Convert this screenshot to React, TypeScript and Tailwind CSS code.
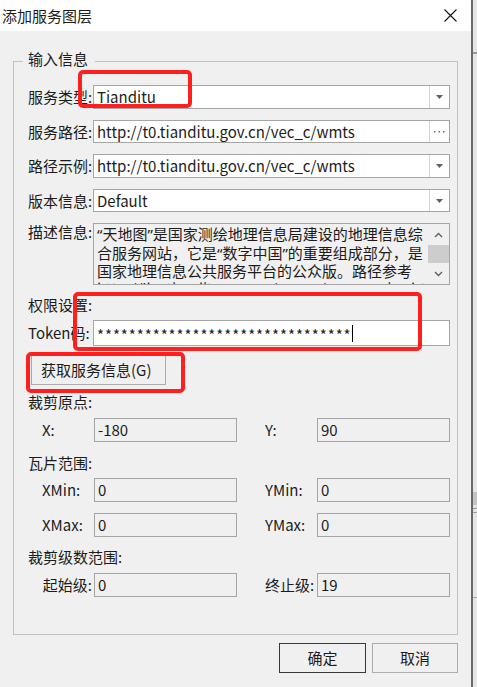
import React from 'react';

const FONT = "font-['Noto_Sans_CJK_SC','Microsoft_YaHei',sans-serif]";

const Arrow = () => (
  <svg width="7" height="4" viewBox="0 0 7 4">
    <path d="M0 0h7L3.5 4z" fill="#606060" />
  </svg>
);

const Combo = ({ value, dots }: { value: string; dots?: boolean }) => (
  <div className="w-[357px] h-full flex border border-[#a5a5a5] bg-white">
    <div className="flex-1 pl-[3px] flex items-center whitespace-nowrap overflow-hidden">{value}</div>
    <div className="w-[20px] border-l border-[#d4d4d4] flex items-center justify-center">
      {dots ? (
        <svg width="11" height="2" viewBox="0 0 11 2">
          <rect x="0" y="0" width="1.5" height="1.5" fill="#707070" />
          <rect x="4.5" y="0" width="1.5" height="1.5" fill="#707070" />
          <rect x="9" y="0" width="1.5" height="1.5" fill="#707070" />
        </svg>
      ) : (
        <Arrow />
      )}
    </div>
  </div>
);

const Field = ({ value, w }: { value: string; w: string }) => (
  <div className={`${w} h-full border border-[#a5a5a5] bg-[#f0f0f0] pl-[3px] flex items-center`}>{value}</div>
);

const PairRow = ({
  a, av, b, bv, right, h = 'h-[24px]', mt,
}: { a: string; av: string; b: string; bv: string; right?: boolean; h?: string; mt: string }) => (
  <div className={`flex items-center ${h} ${mt}`}>
    <div className={`w-[66px] flex ${right ? 'justify-end pr-[2px]' : 'pl-[14px]'}`}>{a}</div>
    <Field value={av} w="w-[143px]" />
    <div className="w-[28px]" />
    <div className="w-[52px]">{b}</div>
    <Field value={bv} w="w-[133px]" />
  </div>
);

const Q = ({ c }: { c: string }) => <span className="font-['Noto_Sans',sans-serif]">{c}</span>;

export default function App() {
  return (
    <div className={`w-[477px] h-[687px] flex overflow-hidden bg-[#f0f0f0] text-[15px] leading-[18px] text-[#1c1c1c] ${FONT}`}>
      <div className="w-[471px] flex flex-col relative">
        {/* title bar */}
        <div className="h-[31px] bg-white flex items-center justify-between pl-[2px] pr-[14px]">
          <span>添加服务图层</span>
          <svg width="13" height="13" viewBox="0 0 13 13">
            <path d="M0.5 0.5L12.5 12.5M12.5 0.5L0.5 12.5" stroke="#111" strokeWidth="1.1" />
          </svg>
        </div>

        <div className="px-[13px]">
          <div className="relative mt-[30px] w-[445px] border border-[#c2c2c2] pl-[14px] pr-[6px] pb-[37px]">
            <span className="absolute top-[-12px] left-[9px] pl-[5px] pr-[7px] bg-[#f0f0f0]">输入信息</span>

            <div className="flex items-center h-[24px] mt-[23px]">
              <div className="w-[65px]">服务类型:</div>
              <Combo value="Tianditu" />
            </div>
            <div className="flex items-center h-[23px] mt-[11px]">
              <div className="w-[65px]">服务路径:</div>
              <Combo value="http://t0.tianditu.gov.cn/vec_c/wmts" dots />
            </div>
            <div className="flex items-center h-[24px] mt-[11px]">
              <div className="w-[65px]">路径示例:</div>
              <Combo value="http://t0.tianditu.gov.cn/vec_c/wmts" />
            </div>
            <div className="flex items-center h-[23px] mt-[11px]">
              <div className="w-[65px]">版本信息:</div>
              <Combo value="Default" />
            </div>

            <div className="flex items-start h-[62px] mt-[11px]">
              <div className="w-[65px]">描述信息:</div>
              <div className="w-[357px] h-full border border-[#a5a5a5] bg-[#f0f0f0] flex overflow-hidden">
                <div className="flex-1 pl-[3px] pt-[1px] leading-[17.5px] overflow-hidden">
                  <div className="whitespace-nowrap"><Q c="“" />天地图<Q c="”" />是国家测绘地理信息局建设的地理信息综</div>
                  <div className="whitespace-nowrap">合服务网站，它是<Q c="“" />数字中国<Q c="”" />的重要组成部分，是</div>
                  <div className="whitespace-nowrap">国家地理信息公共服务平台的公众版。路径参考</div>
                  <div className="whitespace-nowrap">http://lbs.tianditu.gov.cn/server/MapService.html</div>
                </div>
                <div className="w-[21px] flex flex-col items-stretch">
                  <div className="h-[21px] flex items-center justify-center">
                    <svg width="9" height="6" viewBox="0 0 9 6">
                      <path d="M1 5L4.5 1.5L8 5" stroke="#606060" strokeWidth="1.4" fill="none" />
                    </svg>
                  </div>
                  <div className="h-[18px] bg-[#cdcdcd]" />
                  <div className="flex-1 flex items-center justify-center">
                    <svg width="9" height="6" viewBox="0 0 9 6">
                      <path d="M1 1L4.5 4.5L8 1" stroke="#606060" strokeWidth="1.4" fill="none" />
                    </svg>
                  </div>
                </div>
              </div>
            </div>

            <div className="h-[18px] mt-[11px]">权限设置:</div>
            <div className="flex items-center h-[26px] mt-[6px]">
              <div className="w-[65px]">Token码:</div>
              <div className="w-[357px] h-full border border-[#a5a5a5] bg-white pl-[3px] flex items-center whitespace-nowrap">
                <span className="tracking-[0.95px] pt-[3px]">********************************</span>
                <span className="w-px h-[17px] bg-black" />
              </div>
            </div>

            <div className="mt-[9px] ml-[3px] w-[135px] h-[30px] border border-[#adadad] bg-[#f0f0f0] pl-[9px] flex items-center">
              获取服务信息(G)
            </div>

            <div className="h-[18px] mt-[8px]">裁剪原点:</div>
            <PairRow a="X:" av="-180" b="Y:" bv="90" mt="mt-[7px]" />
            <div className="h-[18px] mt-[12px]">瓦片范围:</div>
            <PairRow a="XMin:" av="0" b="YMin:" bv="0" mt="mt-[6px]" />
            <PairRow a="XMax:" av="0" b="YMax:" bv="0" mt="mt-[11px]" />
            <div className="h-[18px] mt-[11px]">裁剪级数范围:</div>
            <PairRow a="起始级:" av="0" b="终止级:" bv="19" right mt="mt-[7px]" />
          </div>

          <div className="flex justify-end gap-[6px] mt-[8px]">
            <button className="w-[87px] h-[30px] border border-[#3a3a3a] bg-[#f0f0f0]">确定</button>
            <button className="w-[86px] h-[30px] border border-[#adadad] bg-[#f0f0f0]">取消</button>
          </div>
        </div>

        {/* red annotation marks */}
        <div className="absolute left-[78px] top-[70px] w-[114px] h-[38px] border-4 border-[#ff1f1f] rounded-[5px]" />
        <div className="absolute left-[73px] top-[292px] w-[349px] h-[59px] border-4 border-[#ff1f1f] rounded-[5px]" />
        <div className="absolute left-[26px] top-[352px] w-[159px] h-[41px] border-4 border-[#ff1f1f] rounded-[5px]" />
      </div>

      <div className="w-[2px] bg-[#6a6a6a]" />
      <div className="flex-1 flex flex-col bg-[#e6e6e6]">
        <div className="h-[52px]" />
        <div className="h-[2px] bg-[#9a9a9a]" />
        <div className="h-[438px]" />
        <div className="h-[13px] bg-[#c4c4c4]" />
        <div className="h-[3px]" />
        <div className="h-px bg-[#9a9a9a]" />
        <div className="h-[3px]" />
        <div className="h-px bg-[#9a9a9a]" />
        <div className="h-[84px]" />
        <div className="h-px bg-[#a8a8a8]" />
      </div>
    </div>
  );
}
